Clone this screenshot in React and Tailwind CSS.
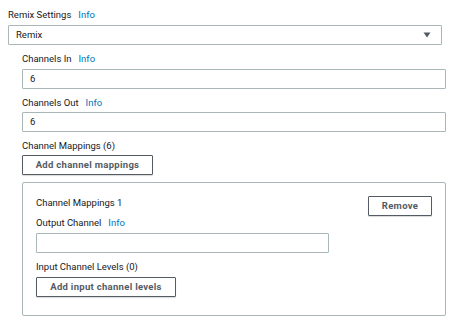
import React from "react";

const font = { fontFamily: "Roboto, 'Liberation Sans', Arial, sans-serif" };

function Label({ text, info }) {
  return (
    <div className="h-[14px] leading-[14px] text-[9.5px] text-[#16191f] flex items-center whitespace-nowrap">
      <span>{text}</span>
      {info && <span className="ml-[7px] text-[#0073bb]">Info</span>}
    </div>
  );
}

function Input({ value, className = "" }) {
  return (
    <div
      className={
        "h-[20px] border border-[#aab7b8] bg-white rounded-[1px] flex items-center px-[7px] text-[9.5px] text-[#16191f] " +
        className
      }
    >
      {value}
    </div>
  );
}

function Button({ children, className = "" }) {
  return (
    <div
      className={
        "h-[20px] border border-[#545b64] bg-white rounded-[1px] flex items-center justify-center text-[9.5px] font-bold text-[#545b64] tracking-[0.3px] shadow-[0_1px_1px_rgba(0,0,0,0.15)] whitespace-nowrap " +
        className
      }
    >
      {children}
    </div>
  );
}

export default function App() {
  return (
    <div className="w-[452px] h-[323px] bg-white overflow-hidden" style={font}>
      <div className="pl-[8px] pt-[8px]">
        <Label text="Remix Settings" info />
        <div className="mt-[3px] w-[434px] h-[20px] border border-[#aab7b8] rounded-[1px] flex items-center justify-between pl-[7px] pr-[10px] text-[9.5px] text-[#16191f]">
          <span>Remix</span>
          <svg width="8" height="6" viewBox="0 0 8 6">
            <path d="M0.5 0.5 L7.5 0.5 L4 5.5 Z" fill="#545b64" />
          </svg>
        </div>
      </div>
      <div className="ml-[22px] w-[424px]">
        <div className="mt-[7px]">
          <Label text="Channels In" info />
        </div>
        <Input value="6" className="mt-[3px]" />
        <div className="mt-[7px]">
          <Label text="Channels Out" info />
        </div>
        <Input value="6" className="mt-[2px]" />
        <div className="mt-[7px]">
          <Label text="Channel Mappings (6)" />
        </div>
        <Button className="mt-[2px] w-[131px]">Add channel mappings</Button>
        <div className="mt-[7px] h-[134px] border border-[#aab7b8] rounded-[2px] px-[13px] pt-[13px]">
          <div className="flex items-start justify-between">
            <Label text="Channel Mappings 1" />
            <Button className="w-[64px]">Remove</Button>
          </div>
          <Label text="Output Channel" info />
          <Input value="" className="mt-[3px] w-[293px]" />
          <div className="mt-[7px]">
            <Label text="Input Channel Levels (0)" />
          </div>
          <Button className="mt-[3px] w-[140px]">Add input channel levels</Button>
        </div>
      </div>
    </div>
  );
}
